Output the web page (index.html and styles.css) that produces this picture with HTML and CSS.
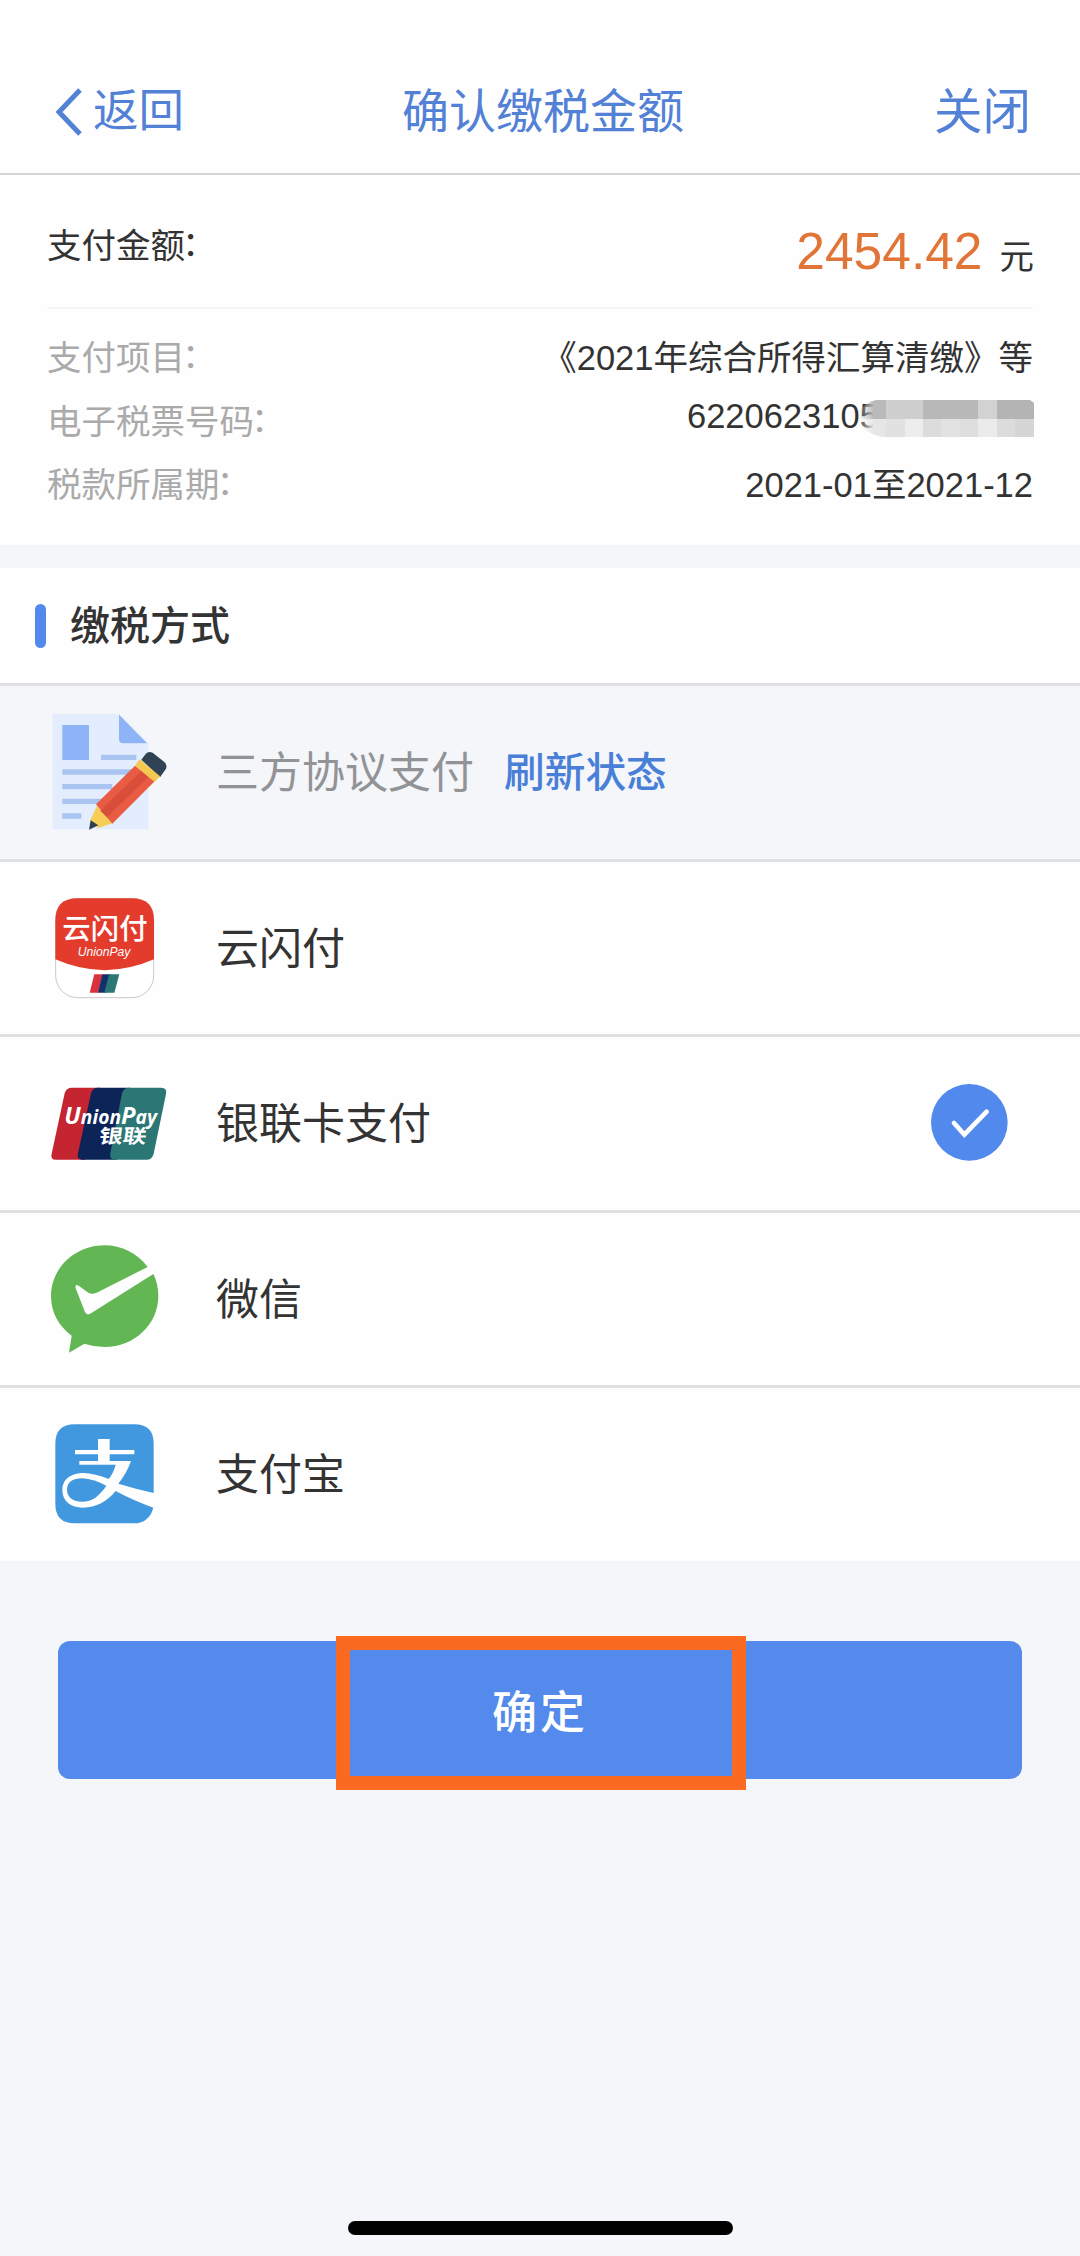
FILE: index.html
```html
<!DOCTYPE html>
<html lang="zh-CN">
<head>
<meta charset="utf-8">
<title>确认缴税金额</title>
<link rel="stylesheet" href="styles.css">
</head>
<body>
<div class="screen">
  <header class="nav">
    <a class="nav-back">
      <svg class="chevron" viewBox="0 0 28 50"><path d="M25 3L4 25L25 47"/></svg>
      <span>返回</span>
    </a>
    <h1 class="nav-title">确认缴税金额</h1>
    <a class="nav-close">关闭</a>
  </header>

  <section class="summary">
    <div class="amount-row">
      <span class="amount-label">支付金额<span class="colon">：</span></span>
      <span class="amount-value"><span class="amount">2454.42</span><span class="unit">元</span></span>
    </div>
    <dl class="details">
      <div class="detail"><dt>支付项目<span class="colon">：</span></dt><dd>《2021年综合所得汇算清缴》等</dd></div>
      <div class="detail"><dt>电子税票号码<span class="colon">：</span></dt><dd class="ticket"><span>6220623105</span>
        <svg class="mosaic" viewBox="-10 0 176 37">
          <defs>
            <linearGradient id="fade"><stop offset="0" stop-color="#fff" stop-opacity="0"/><stop offset=".09" stop-color="#fff"/></linearGradient>
            <mask id="edge" maskUnits="userSpaceOnUse" x="-10" y="0" width="176" height="37"><path d="M-10 12Q-2 2 8 0H162L166 3V37H14Q0 34 -10 24Z" fill="url(#fade)"/></mask>
          </defs>
          <g mask="url(#edge)">
            <path fill="#bababa" d="M-10 0h28v19H-10z"/><path fill="#cfcfcf" d="M18 0h37v19H18z"/>
            <path fill="#b9b9b9" d="M55 0h55v19H55z"/><path fill="#d2d2d2" d="M110 0h19v19h-19z"/>
            <path fill="#b4b4b4" d="M129 0h37v19h-37z"/>
            <path fill="#e6e6e6" d="M-10 19h28v18H-10z"/><path fill="#e1e1e1" d="M18 19h19v18H18z"/>
            <path fill="#ededed" d="M37 19h18v18H37z"/><path fill="#dcdcdc" d="M55 19h18v18H55z"/>
            <path fill="#e2e2e2" d="M73 19h19v18H73z"/><path fill="#dedede" d="M92 19h18v18H92z"/>
            <path fill="#ebebeb" d="M110 19h19v18h-19z"/><path fill="#dcdcdc" d="M129 19h18v18h-18z"/>
            <path fill="#d6d6d6" d="M147 19h19v18h-19z"/>
          </g>
        </svg></dd></div>
      <div class="detail"><dt>税款所属期<span class="colon">：</span></dt><dd>2021-01至2021-12</dd></div>
    </dl>
  </section>

  <section class="methods">
    <h2 class="methods-title"><span>缴税方式</span></h2>
    <ul class="method-list">
      <li class="method method-disabled">
        <svg class="icon" viewBox="30 51 390 390">
          <path fill="#e3edfd" d="M68 72H268L355 160V418H68Z"/>
          <path fill="#8eb3f6" d="M97 105h80v105H97zM267 74L351 160H279Q267 160 267 148Z"/>
          <path fill="#aac4f1" d="M213 194h106v16H213zM97 238h206v16H97zM97 282h150v16H97zM97 326h120v16H97zM97 370h57v16H97z"/>
          <path fill="#2f4354" d="M334 209L347 192Q355 182 368 188L403 216Q412 224 408 236L390 262Z"/>
          <path fill="#f7cd57" d="M201 347L247 400L205 414L180 392Z"/>
          <path fill="#e95c43" d="M198 343L315 227L374 274L247 401Z"/>
          <path fill="#d94e3a" d="M211 362L334 242L356 260L231 382Z"/>
          <path fill="#f4c950" d="M315 227L329 208L390 259L374 276Z"/>
          <path fill="#2f3f4f" d="M182 391L205 406L177 419Z"/>
        </svg>
        <span class="method-name">三方协议支付</span>
        <a class="refresh">刷新状态</a>
      </li>
      <li class="method">
        <svg class="icon" viewBox="30 578 390 390">
          <rect x="77" y="625" width="294" height="297" rx="66" fill="#fff" stroke="#c9c9c9" stroke-width="3"/>
          <path fill="#e33c2d" d="M76 807V690Q76 624 142 624H306Q372 624 372 690V807Q224 872 76 807Z"/>
          <text class="quick-cn" x="97" y="746" textLength="256">云闪付</text>
          <text class="quick-en" x="143" y="797" textLength="158" lengthAdjust="spacingAndGlyphs">UnionPay</text>
          <path fill="#d8333b" d="M193 852h25l-13 55h-26z"/>
          <path fill="#12306b" d="M217 852h25l-14 55h-24z"/>
          <path fill="#2a7775" d="M237 852h31l-15 55h-30z"/>
        </svg>
        <span class="method-name">云闪付</span>
      </li>
      <li class="method">
        <svg class="icon" viewBox="30 -5 390 390">
          <path fill="#c42531" d="M126 84H210L165 300H78Q60 300 65 282L104 101Q108 84 126 84Z"/>
          <path fill="#0c2458" d="M204 84H300L260 300H158Q139 300 144 281L183 101Q187 84 204 84Z"/>
          <path fill="#2a7775" d="M298 84H393Q412 84 408 103L371 282Q367 300 349 300H255Q237 300 241 281L276 101Q280 84 298 84Z"/>
          <text class="up-en" x="103" y="192" textLength="278" lengthAdjust="spacingAndGlyphs"><tspan class="up-cap">U</tspan>nion<tspan class="up-cap">P</tspan>ay</text>
          <text class="up-cn" transform="translate(205 251) skewX(-8)" textLength="142" lengthAdjust="spacingAndGlyphs">银联</text>
        </svg>
        <span class="method-name">银联卡支付</span>
        <svg class="check" viewBox="150 133 234 234"><circle cx="268" cy="248" r="115"/><path d="M222 250L253 285L320 216"/></svg>
      </li>
      <li class="method">
        <svg class="icon" viewBox="30 521 390 390">
          <path fill="#62b654" d="M353 620C322 579 275 555 224 555C135 555 63 623 63 707C63 757 87 798 125 826L117 877L163 850Q193 860 224 860C313 860 385 792 385 707C385 683 380 661 370 641L183 759Q171 767 165 755L137 684Q134 668 147 677L175 697Q184 703 200 697Z"/>
        </svg>
        <span class="method-name">微信</span>
      </li>
      <li class="method">
        <svg class="icon" viewBox="30 88 390 390">
          <path fill="#4298df" d="M134 134H313Q371 134 371 192V340Q318 328 265 312Q290 281 303 244H239V224H313V211H239V178H204V211H135V224H204V244H148V255H257Q251 279 236 298C205 286 174 278 148 281C115 285 97 304 97 331C97 364 122 384 159 384C199 384 231 365 257 334Q309 362 370 384C363 412 343 431 313 431H134Q76 431 76 373V192Q76 134 134 134Z"/>
          <path fill="#4298df" d="M111 330C111 307 129 296 156 296C181 297 205 306 229 318C208 349 187 366 156 366C130 366 111 353 111 330Z"/>
        </svg>
        <span class="method-name">支付宝</span>
      </li>
    </ul>
  </section>

  <footer class="actions">
    <button class="confirm"><span>确定</span><i class="highlight"></i></button>
  </footer>
  <div class="home-indicator"></div>
</div>
</body>
</html>
```
FILE: styles.css
```css
* { box-sizing: border-box; margin: 0; padding: 0; }

body {
  background: #f4f6fa;
  color: #333;
  font-family: "Liberation Sans", "Noto Sans CJK SC", sans-serif;
  font-size: 34.5px;
}

.screen {
  display: flex;
  flex-direction: column;
  width: 1080px;
  height: 2256px;
}

.nav {
  display: grid;
  grid-template-columns: 1fr auto 1fr;
  align-items: center;
  height: 175px;
  padding: 50px 49px 0 55px;
  border-bottom: 2px solid #d3d7d8;
  background: #fefefe;
  color: #5281d6;
  line-height: 64px;
}
.nav-back { display: flex; align-items: center; gap: 10px; font-size: 45.5px; }
.chevron { width: 28px; height: 50px; fill: none; stroke: #5281d6; stroke-width: 5; }
.nav-title { font-size: 47px; font-weight: 400; }
.nav-close { justify-self: end; font-size: 48.5px; }

.summary { height: 370px; padding: 0 47px; background: #fefefe; }
.amount-row {
  display: flex;
  justify-content: space-between;
  height: 134px;
  border-bottom: 2px solid #f5f5f6;
}
.amount-label { padding-top: 46px; line-height: 50px; }
.amount-value { display: flex; align-items: baseline; gap: 17px; padding-top: 41px; margin-right: -1px; line-height: 70px; }
.amount { color: #e07537; font-size: 51.5px; }
.colon { margin-left: -3px; line-height: 1; vertical-align: 2px; }
.details { padding-top: 18px; }
.detail { display: flex; justify-content: space-between; height: 63.5px; line-height: 63.5px; }
.detail dt { color: #aaa; }
.ticket { position: relative; width: 346px; line-height: 51px; }
.mosaic { position: absolute; top: 9px; right: -1px; width: 176px; height: 37px; }

.methods { margin-top: 23px; background: #fefefe; }
.methods-title {
  display: flex;
  align-items: center;
  gap: 24px;
  height: 115px;
  padding-left: 35px;
  font-size: 40px;
  font-weight: 500;
}
.methods-title span { padding-bottom: 5px; }
.methods-title::before { content: ""; width: 11px; height: 44px; border-radius: 6px; background: #5289ec; }
.method-list { list-style: none; }
.method {
  display: flex;
  align-items: center;
  height: 175.5px;
  padding: 0 72px 0 40px;
  border-top: 3px solid #dfe0e2;
  font-size: 43px;
}
.method-disabled { background: #f4f6fa; color: #929396; }
.icon { width: 130px; height: 130px; margin-right: 46px; }
.method-name, .refresh { padding-bottom: 6px; }
.refresh { margin-left: 30px; color: #4a7fd8; font-size: 40.7px; font-weight: 500; }
.check { width: 78px; height: 78px; margin-left: auto; }
.check circle { fill: #5289ec; }
.check path { fill: none; stroke: #fff; stroke-width: 14; stroke-linecap: round; }

.quick-cn { fill: #fff; font: 500 85px "Noto Sans CJK SC", sans-serif; }
.quick-en { fill: #fff; font: italic 41px "Liberation Sans", sans-serif; }
.up-en { fill: #fff; font: italic 700 58px "Open Sans", sans-serif; }
.up-cap { font-size: 72px; }
.up-cn { fill: #fff; font: 700 58px "Noto Sans CJK SC", sans-serif; }

.actions { padding: 80px 58px 0; }
.confirm {
  position: relative;
  display: block;
  width: 100%;
  height: 138px;
  border: 0;
  border-radius: 12px;
  background: #548aeb;
  color: #fff;
  font: 500 45px "Noto Sans CJK SC", sans-serif;
  letter-spacing: 3px;
}
.highlight { position: absolute; left: 278px; top: -5px; width: 410px; height: 154px; border: 14px solid #fa6a20; }

.home-indicator { align-self: center; width: 385px; height: 14px; margin-top: auto; margin-bottom: 21px; border-radius: 7px; background: #000; }
```
